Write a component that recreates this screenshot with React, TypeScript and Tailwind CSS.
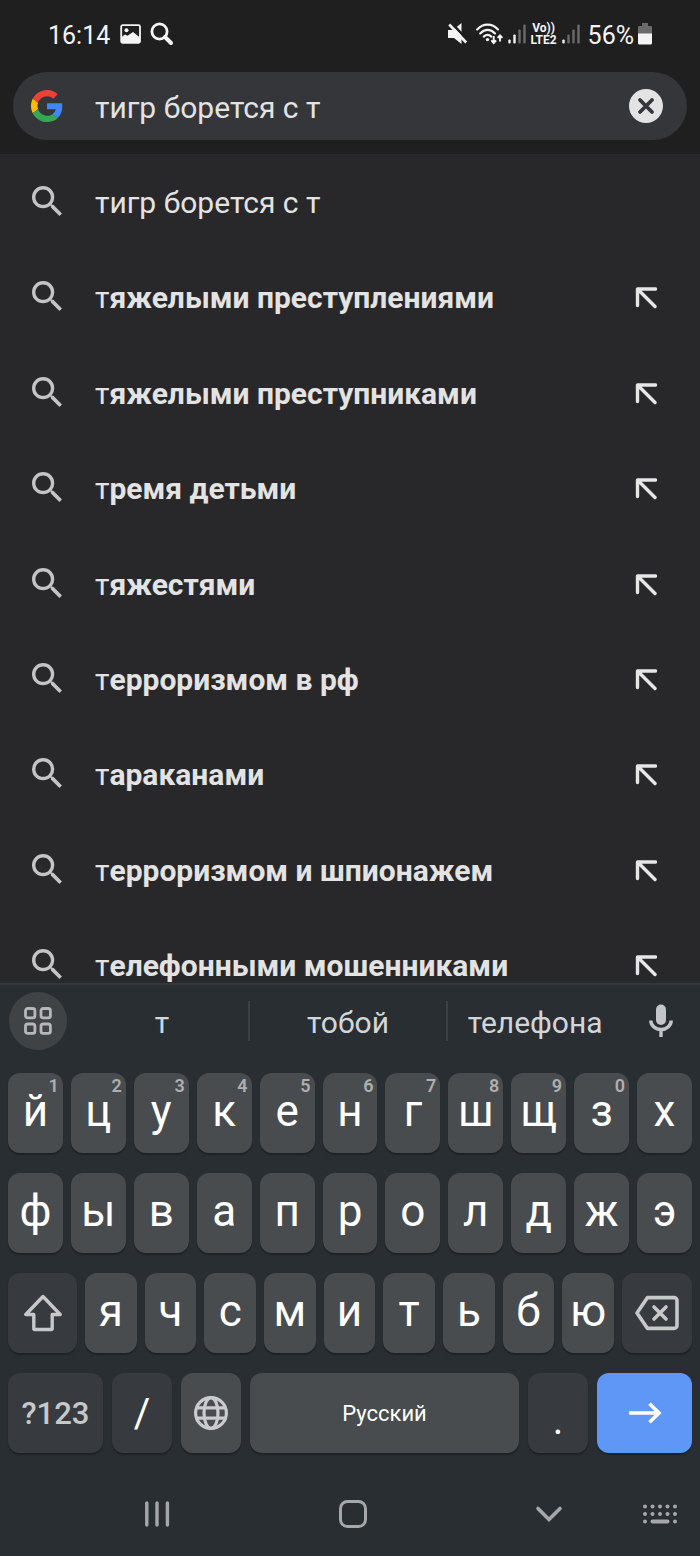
import { useState } from 'react';
import type { ReactNode } from 'react';

type Suggestion = {
  /** Part the user has already typed, shown in regular weight. */
  typed: string;
  /** Completion, shown in bold. */
  rest: string;
};

const suggestions: Suggestion[] = [
  { typed: 'тигр борется с т', rest: '' },
  { typed: 'т', rest: 'яжелыми преступлениями' },
  { typed: 'т', rest: 'яжелыми преступниками' },
  { typed: 'т', rest: 'ремя детьми' },
  { typed: 'т', rest: 'яжестями' },
  { typed: 'т', rest: 'ерроризмом в рф' },
  { typed: 'т', rest: 'араканами' },
  { typed: 'т', rest: 'ерроризмом и шпионажем' },
  { typed: 'т', rest: 'елефонными мошенниками' },
];

const topRow = ['й', 'ц', 'у', 'к', 'е', 'н', 'г', 'ш', 'щ', 'з', 'х'];
const topHints = ['1', '2', '3', '4', '5', '6', '7', '8', '9', '0', ''];
const middleRow = ['ф', 'ы', 'в', 'а', 'п', 'р', 'о', 'л', 'д', 'ж', 'э'];
const bottomRow = ['я', 'ч', 'с', 'м', 'и', 'т', 'ь', 'б', 'ю'];

function SignalIcon({ level }: { level: number }) {
  const bars = [
    { x: 0, y: 15 },
    { x: 5, y: 10 },
    { x: 10, y: 5 },
    { x: 15, y: 0 },
  ];
  return (
    <svg width="18" height="20" viewBox="0 0 18 20" aria-hidden="true">
      {bars.map((bar, i) => (
        <rect
          key={bar.x}
          x={bar.x + 0.3}
          y={bar.y + 0.5}
          width="2.4"
          height={19 - bar.y}
          rx="1"
          fill={i < level ? '#f4f4f4' : '#6b6b6b'}
        />
      ))}
    </svg>
  );
}

function StatusBar() {
  return (
    <div className="flex h-[72px] items-center justify-between pr-12 pb-1 pl-12 text-[25px] leading-8 text-[#f4f4f4]">
      <div className="flex items-center">
        <span className="pt-1">16:14</span>
        <svg className="ml-[10px]" width="22" height="20" viewBox="0 0 22 20" aria-hidden="true">
          <rect x="1.2" y="1.2" width="18.8" height="17.6" rx="1.5" fill="none" stroke="#f4f4f4" strokeWidth="1.8" />
          <circle cx="6.5" cy="6.3" r="2" fill="#f4f4f4" />
          <path d="M1.5 13 5 10.5l2.5 1.3L13 8l7 5.5v5.5H1.5z" fill="#f4f4f4" />
        </svg>
        <svg className="ml-2" width="24" height="24" viewBox="0 0 24 24" fill="none" stroke="#f4f4f4" aria-hidden="true">
          <circle cx="9.5" cy="9.5" r="7.6" strokeWidth="2.8" />
          <path d="m15 15 6 6" strokeWidth="4" strokeLinecap="round" />
        </svg>
      </div>
      <div className="flex items-center">
        <svg width="20" height="22" viewBox="0 0 20 22" aria-hidden="true">
          <path d="M0 7h5l8.5-7v21L6 15H0z" fill="#f4f4f4" />
          <path d="M2 -1.5 21 18.5" stroke="#1f1f1f" strokeWidth="2.6" />
          <path d="m1.2 1.5 17 18" stroke="#f4f4f4" strokeWidth="2.6" />
        </svg>
        <svg className="ml-2" width="28" height="22" viewBox="0 0 28 22" fill="none" stroke="#f4f4f4" aria-hidden="true">
          <g strokeWidth="2.2" strokeLinecap="round">
            <path d="M1.2 6.4C7.2 0 16 0 22 6.4" />
            <path d="M4.2 10.4c4.5-4.6 10.3-4.6 14.8 0" />
            <path d="M7.8 13.6c2.3-2.2 5.2-2.2 7.5 0" />
          </g>
          <circle cx="11.5" cy="16.6" r="1.7" fill="#f4f4f4" stroke="none" />
          <path d="M17.7 13v7m-2.4-2.6 2.4 2.6 2.4-2.6M24 18.5v-6.2m-2.4 2.6 2.4-2.6 2.4 2.6" strokeWidth="1.9" />
        </svg>
        <span className="ml-1 flex">
          <SignalIcon level={2} />
        </span>
        <span className="ml-1 flex w-[28px] flex-col items-center text-[12px] leading-[12px] font-bold">
          <span>Vo))</span>
          <span>LTE2</span>
        </span>
        <span className="ml-1 flex">
          <SignalIcon level={1} />
        </span>
        <span className="ml-2 pt-1">56%</span>
        <svg className="ml-1" width="14" height="22" viewBox="0 0 14 22" aria-hidden="true">
          <path d="M4 0h6v3h3a1 1 0 0 1 1 1v7H0V4a1 1 0 0 1 1-1h3z" fill="#6b6b6b" />
          <path d="M0 10.5h14V20a1.5 1.5 0 0 1-1.5 1.5h-11A1.5 1.5 0 0 1 0 20z" fill="#f4f4f4" />
        </svg>
      </div>
    </div>
  );
}

function GoogleLogo() {
  return (
    <svg width="32" height="32" viewBox="0 0 48 48" aria-hidden="true">
      <path
        fill="#EA4335"
        d="M24 9.5c3.54 0 6.71 1.22 9.21 3.6l6.85-6.85C35.9 2.38 30.47 0 24 0 14.62 0 6.51 5.38 2.56 13.22l7.98 6.19C12.43 13.72 17.74 9.5 24 9.5z"
      />
      <path
        fill="#4285F4"
        d="M46.98 24.55c0-1.57-.15-3.09-.38-4.55H24v9.02h12.94c-.58 2.96-2.26 5.48-4.78 7.18l7.73 6c4.51-4.18 7.09-10.36 7.09-17.65z"
      />
      <path
        fill="#FBBC05"
        d="M10.53 28.59c-.48-1.45-.76-2.99-.76-4.59s.27-3.14.76-4.59l-7.98-6.19C.92 16.46 0 20.12 0 24c0 3.88.92 7.54 2.56 10.78l7.97-6.19z"
      />
      <path
        fill="#34A853"
        d="M24 48c6.48 0 11.93-2.13 15.89-5.81l-7.73-6c-2.15 1.45-4.92 2.3-8.16 2.3-6.26 0-11.57-4.22-13.47-9.91l-7.98 6.19C6.51 42.62 14.62 48 24 48z"
      />
    </svg>
  );
}

function SearchIcon() {
  return (
    <svg className="shrink-0" width="30" height="30" viewBox="3 3 17.5 17.5" fill="#c4c4c4" aria-hidden="true">
      <path d="M15.5 14h-.79l-.28-.27A6.471 6.471 0 0 0 16 9.5 6.5 6.5 0 1 0 9.5 16c1.61 0 3.09-.59 4.23-1.57l.27.28v.79l5 4.99L20.49 19l-4.99-5zm-6 0C7.01 14 5 11.99 5 9.5S7.01 5 9.5 5 14 7.01 14 9.5 11.99 14 9.5 14z" />
    </svg>
  );
}

function SuggestionRow({ typed, rest }: Suggestion) {
  return (
    <li className="flex h-[34px] shrink-0 items-center justify-between">
      <button type="button" className="flex flex-1 items-start gap-[33px] text-left whitespace-nowrap">
        <SearchIcon />
        <span>
          {typed}
          {rest ? <b className="font-bold">{rest}</b> : null}
        </span>
      </button>
      {rest ? (
        <button type="button" aria-label="Подставить запрос">
          <svg width="22" height="22" viewBox="0 0 22 22" fill="none" stroke="#e6e6e6" strokeWidth="3.4" aria-hidden="true">
            <path d="M2.5 18.5V2h18M3 2.5l17 17" strokeLinecap="round" strokeLinejoin="round" />
          </svg>
        </button>
      ) : null}
    </li>
  );
}

function LetterKey({ letter, hint }: { letter: string; hint?: string }) {
  return (
    <button
      type="button"
      className="relative flex h-20 min-w-0 flex-1 items-center justify-center rounded-[12px] bg-[#494c4e] pb-1 text-[44px] leading-[52px] text-white shadow-[0_2px_1px_#1f2326]"
    >
      {letter}
      {hint ? (
        <span className="absolute top-[3px] right-1 text-[18px] leading-5 font-semibold text-[#adafb0]">{hint}</span>
      ) : null}
    </button>
  );
}

function ActionKey({ label, className, children }: { label?: string; className: string; children: ReactNode }) {
  return (
    <button
      type="button"
      aria-label={label}
      className={`flex h-20 items-center justify-center rounded-[12px] shadow-[0_2px_1px_#1f2326] ${className}`}
    >
      {children}
    </button>
  );
}

function SuggestionStrip() {
  return (
    <div className="flex h-[72px] items-center text-[30px] leading-9 text-[#d3d6d8]">
      <div className="flex w-[76px] shrink-0 justify-center">
        <button
          type="button"
          aria-label="Меню клавиатуры"
          className="flex size-[58px] items-center justify-center rounded-full bg-[#3f4346]"
        >
          <svg width="28" height="28" viewBox="0 0 28 28" fill="none" stroke="#b5b7b9" strokeWidth="2.8" aria-hidden="true">
            <rect x="1.5" y="1.5" width="9.4" height="9.4" rx="2.2" />
            <rect x="17" y="1.5" width="9.4" height="9.4" rx="2.2" />
            <rect x="1.5" y="17" width="9.4" height="9.4" rx="2.2" />
            <rect x="17" y="17" width="9.4" height="9.4" rx="2.2" />
          </svg>
        </button>
      </div>
      <div className="grid flex-1 grid-cols-[7fr_8fr_7fr] divide-x-2 divide-[#3b4044]">
        <button type="button" className="h-10 pt-1">
          т
        </button>
        <button type="button" className="h-10 pt-1">
          тобой
        </button>
        <button type="button" className="h-10 pt-1">
          телефона
        </button>
      </div>
      <div className="flex w-[78px] shrink-0 justify-center">
        <button type="button" aria-label="Голосовой ввод">
          <svg width="24" height="34" viewBox="0 0 24 34" aria-hidden="true">
            <rect x="7" y="0.5" width="10" height="20.5" rx="5" fill="#c3c5c8" />
            <path d="M1.8 16.5a10.2 9 0 0 0 20.4 0M12 25v8" fill="none" stroke="#c3c5c8" strokeWidth="3.4" />
          </svg>
        </button>
      </div>
    </div>
  );
}

function NavBar() {
  return (
    <nav className="flex h-[103px] items-center gap-20 pt-[18px] pr-[23px] pl-[143px]">
      <div className="flex flex-1 items-center justify-between">
        <button type="button" aria-label="Недавние">
          <svg width="28" height="28" viewBox="0 0 28 28" stroke="#a5a7a9" strokeWidth="3.4" strokeLinecap="round" aria-hidden="true">
            <path d="M3.8 3v22M14 3v22M24.4 3v22" />
          </svg>
        </button>
        <button type="button" aria-label="Домой">
          <svg width="28" height="28" viewBox="0 0 28 28" fill="none" stroke="#a5a7a9" strokeWidth="3" aria-hidden="true">
            <rect x="1.5" y="1.5" width="25" height="25" rx="7" />
          </svg>
        </button>
        <button type="button" aria-label="Скрыть клавиатуру">
          <svg width="28" height="28" viewBox="0 0 28 28" fill="none" stroke="#a5a7a9" strokeWidth="3.6" strokeLinecap="round" aria-hidden="true">
            <path d="m3 8.5 11 11 11-11" />
          </svg>
        </button>
      </div>
      <button type="button" aria-label="Сменить клавиатуру">
        <svg width="34" height="20" viewBox="0 0 34 20" fill="#a5a7a9" aria-hidden="true">
          {[2, 9.5, 17, 24.5, 32].map((x) => (
            <g key={x}>
              <circle cx={x} cy="2.5" r="2" />
              <circle cx={x} cy="10" r="2" />
            </g>
          ))}
          <circle cx="2" cy="17.5" r="2" />
          <rect x="7.5" y="15.5" width="19" height="4" rx="2" />
          <circle cx="32" cy="17.5" r="2" />
        </svg>
      </button>
    </nav>
  );
}

function Keyboard() {
  return (
    <div className="border-t-2 border-[#34383c] bg-[#292e32]">
      <SuggestionStrip />
      <div className="flex flex-col gap-5 px-2 pt-[16px]">
        <div className="flex gap-2">
          {topRow.map((letter, i) => (
            <LetterKey key={letter} letter={letter} hint={topHints[i]} />
          ))}
        </div>
        <div className="flex gap-2">
          {middleRow.map((letter) => (
            <LetterKey key={letter} letter={letter} />
          ))}
        </div>
        <div className="flex gap-2">
          <ActionKey label="Shift" className="w-[69px] bg-[#373b3f]">
            <svg width="38" height="38" viewBox="0 0 38 38" fill="none" stroke="#c6c8ca" strokeWidth="3.4" strokeLinejoin="round" aria-hidden="true">
              <path d="M19 2.5 1.8 20.5h8v14a1 1 0 0 0 1 1h16.4a1 1 0 0 0 1-1v-14h8z" />
            </svg>
          </ActionKey>
          {bottomRow.map((letter) => (
            <LetterKey key={letter} letter={letter} />
          ))}
          <ActionKey label="Удалить" className="w-[70px] bg-[#373b3f]">
            <svg width="44" height="36" viewBox="0 0 44 36" fill="none" stroke="#c6c8ca" strokeWidth="3.6" strokeLinejoin="round" aria-hidden="true">
              <path d="M12.5 2.6H39a3 3 0 0 1 3 3v24.8a3 3 0 0 1-3 3H12.5L2 18z" />
              <path d="m19 12 12 12m0-12L19 24" strokeLinecap="round" />
            </svg>
          </ActionKey>
        </div>
        <div className="flex gap-[9px]">
          <ActionKey className="w-[95px] bg-[#373b3f] pt-[2px] text-[31px] leading-9 font-medium text-[#c6c8ca]">?123</ActionKey>
          <ActionKey className="w-[60px] bg-[#373b3f] pt-[2px] text-[40px] leading-[48px] text-white">/</ActionKey>
          <ActionKey label="Язык" className="w-[60px] bg-[#494c4e]">
            <svg width="36" height="36" viewBox="0 0 36 36" fill="none" stroke="#c9cbcd" strokeWidth="3.2" aria-hidden="true">
              <circle cx="18" cy="18" r="15.4" />
              <ellipse cx="18" cy="18" rx="7" ry="15.4" />
              <path d="M4 12.8h28M4 23.2h28" />
            </svg>
          </ActionKey>
          <ActionKey className="flex-1 bg-[#494c4e] pt-[2px] text-[22px] leading-7 text-white">Русский</ActionKey>
          <ActionKey className="w-[60px] bg-[#373b3f] pt-4 text-[40px] leading-[48px] text-white">.</ActionKey>
          <ActionKey label="Найти" className="w-[95px] bg-[#5f97f6]">
            <svg width="34" height="22" viewBox="0 0 34 22" fill="none" stroke="#fff" strokeWidth="3.6" aria-hidden="true">
              <path d="M1 11h30M21.5 1.8 31 11l-9.5 9.2" />
            </svg>
          </ActionKey>
        </div>
      </div>
      <NavBar />
    </div>
  );
}

export default function App() {
  const [query, setQuery] = useState('тигр борется с т');

  return (
    <div className="flex min-h-screen flex-col bg-[#28282a] font-[Roboto,'Noto_Sans',sans-serif]">
      <header className="bg-[#1f1f1f] pb-[14px]">
        <StatusBar />
        <form
          className="mx-[13px] flex h-[68px] items-center rounded-full bg-[#35363a] pr-6 pl-[18px]"
          onSubmit={(e) => e.preventDefault()}
        >
          <GoogleLogo />
          <input
            type="text"
            aria-label="Поиск"
            value={query}
            onChange={(e) => setQuery(e.target.value)}
            className="ml-8 min-w-0 flex-1 bg-transparent pt-[3px] text-[30px] leading-9 text-[#e3e3e3] outline-none"
          />
          <button type="button" aria-label="Очистить" onClick={() => setQuery('')}>
            <svg width="34" height="34" viewBox="0 0 34 34" aria-hidden="true">
              <circle cx="17" cy="17" r="17" fill="#e3e3e3" />
              <path d="m11 11 12 12m0-12L11 23" stroke="#35363a" strokeWidth="3.8" strokeLinecap="round" />
            </svg>
          </button>
        </form>
      </header>

      <ul className="flex flex-1 flex-col justify-between gap-6 pt-8 pr-[43px] pl-8 text-[30px] leading-[34px] text-[#e3e3e3]">
        {suggestions.map((item) => (
          <SuggestionRow key={item.typed + item.rest} typed={item.typed} rest={item.rest} />
        ))}
      </ul>

      <Keyboard />
    </div>
  );
}
